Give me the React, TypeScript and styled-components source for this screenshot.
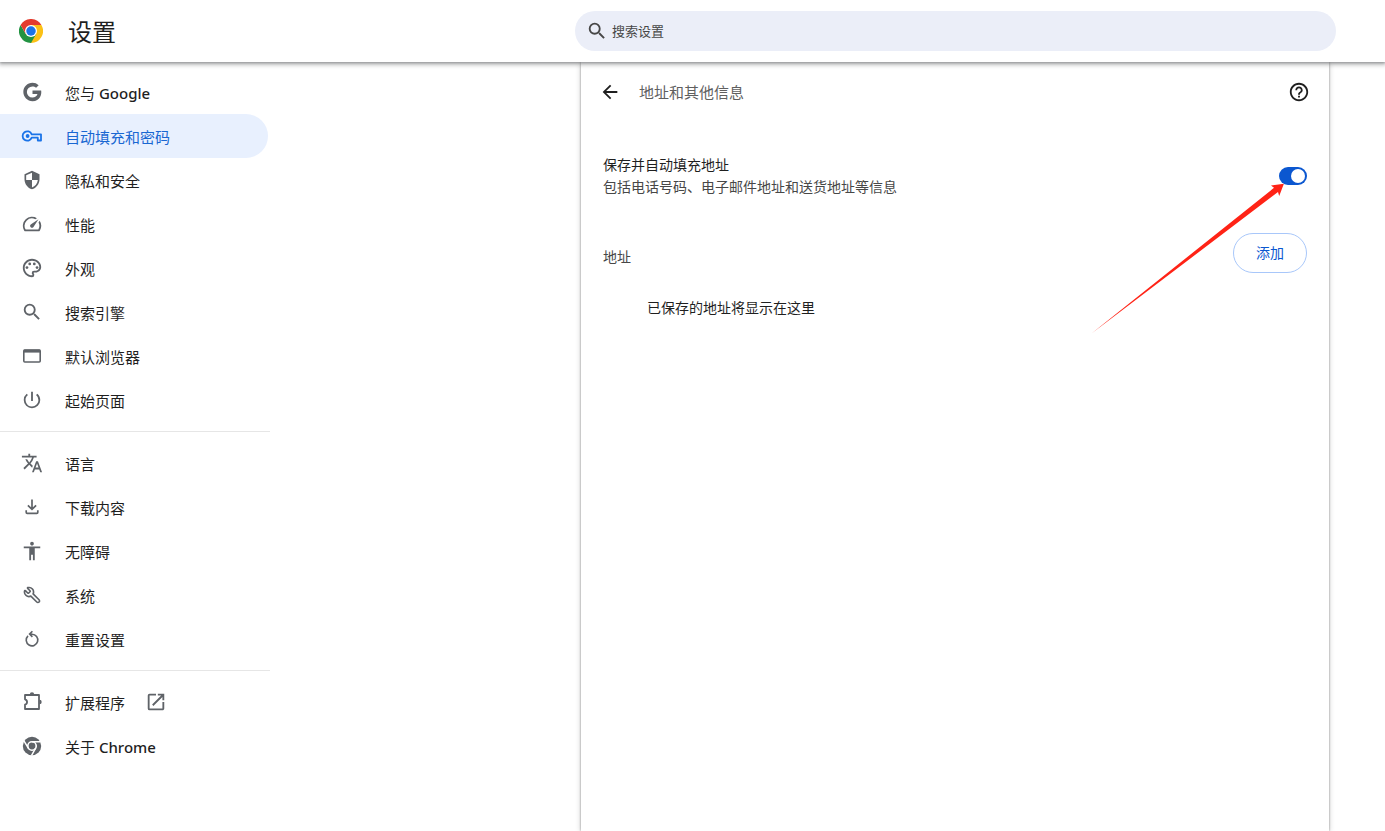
import React from "react";
import styled, { createGlobalStyle } from "styled-components";
import { Wrench } from "lucide-react";
import {
  MdSecurity, MdSpeed, MdOutlinePalette, MdSearch, MdPowerSettingsNew,
  MdTranslate, MdAccessibility, MdOpenInNew, MdArrowBack, MdHelpOutline,
} from "react-icons/md";

const GlobalStyle = createGlobalStyle`
  * { box-sizing: border-box; }
  body {
    margin: 0;
    background: #fff;
    color: #1f1f1f;
    font-family: "Noto Sans", "Noto Sans CJK SC", sans-serif;
    font-size: 14px;
    line-height: 22px;
  }
`;

const Page = styled.div`
  min-height: 100vh;
  display: flex;
  flex-direction: column;
`;

const Header = styled.header`
  position: relative;
  z-index: 1;
  height: 62px;
  flex: none;
  display: flex;
  align-items: center;
  justify-content: space-between;
  padding: 0 49px 0 19px;
  background: #fff;
  box-shadow: 0 1px 2px rgba(60, 64, 67, 0.3), 0 2px 4px 1px rgba(60, 64, 67, 0.35);
`;

const Brand = styled.div`
  display: flex;
  align-items: center;
  gap: 25px;
`;

const Heading = styled.h1`
  margin: 0;
  padding-top: 2px;
  font-size: 24px;
  line-height: 32px;
  font-weight: 400;
`;

const SearchBox = styled.label`
  flex: 0 1 761px;
  height: 40px;
  display: flex;
  align-items: center;
  gap: 4px;
  padding: 0 11px;
  border-radius: 20px;
  background: #ebeef8;
  color: #474747;
`;

const SearchInput = styled.input`
  flex: 1;
  min-width: 0;
  padding: 0;
  border: 0;
  outline: 0;
  background: transparent;
  font: inherit;
  font-size: 13px;
  color: inherit;
  &::placeholder { color: #474747; opacity: 1; }
`;

const Body = styled.div`
  flex: 1;
  display: flex;
  justify-content: space-between;
`;

const Sidebar = styled.nav`
  flex: none;
  width: 270px;
  padding-top: 8px;
`;

const NavList = styled.ul`
  margin: 0;
  padding: 0;
  list-style: none;
  & + & {
    margin-top: 9px;
    padding-top: 9px;
    border-top: 1px solid #e6e6e6;
  }
`;

const NavLink = styled.a<{ $active?: boolean }>`
  height: 44px;
  margin-right: 2px;
  padding-left: 21px;
  display: flex;
  align-items: center;
  border-radius: 0 22px 22px 0;
  background: ${(p) => (p.$active ? "#e8f0fe" : "transparent")};
  color: ${(p) => (p.$active ? "#1967d2" : "#1f1f1f")};
  font-size: 15px;
  text-decoration: none;
  svg {
    flex: none;
    color: ${(p) => (p.$active ? "#1a73e8" : "#5f6368")};
  }
`;

const NavIcon = styled.span`
  flex: none;
  width: 22px;
  display: flex;
  justify-content: center;
`;

const NavText = styled.span`
  padding: 2px 20px 0 22px;
`;

const Latin = styled.span`
  font-weight: 500;
`;

const Card = styled.main`
  flex: 0 1 748px;
  margin-right: 56px;
  padding: 8px 22px 22px;
  background: #fff;
  box-shadow: 0 0 2px rgba(0, 0, 0, 0.4), 0 1px 6px rgba(0, 0, 0, 0.2);
`;

const TitleRow = styled.div`
  height: 44px;
  margin: 0 -3px 0 -4px;
  display: flex;
  align-items: center;
  gap: 18px;
`;

const IconButton = styled.button`
  display: flex;
  padding: 0;
  border: 0;
  background: none;
  color: #1f1f1f;
`;

const Title = styled.h2`
  flex: 1;
  margin: 0;
  font-size: 15px;
  font-weight: 400;
  color: #5f5f5f;
`;

const ToggleRow = styled.label`
  margin-top: 40px;
  display: flex;
  align-items: center;
  justify-content: space-between;
`;

const Secondary = styled.div`
  color: #474747;
`;

const Switch = styled.input`
  appearance: none;
  width: 28px;
  height: 18px;
  margin: 0;
  padding: 2px;
  border-radius: 9px;
  background: #aaa;
  display: flex;
  &::before {
    content: "";
    width: 14px;
    height: 14px;
    border-radius: 50%;
    background: #fff;
  }
  &:checked {
    background: #0b57d0;
    justify-content: flex-end;
  }
`;

const SectionRow = styled.div`
  margin-top: 35px;
  display: flex;
  align-items: center;
  justify-content: space-between;
`;

const SectionTitle = styled.h3`
  margin: 0;
  padding-top: 8px;
  font-size: 14px;
  font-weight: 400;
  color: #474747;
`;

const AddButton = styled.button`
  height: 40px;
  padding: 0 22px;
  border: 1px solid #a8c7fa;
  border-radius: 20px;
  background: #fff;
  color: #0b57d0;
  font: inherit;
`;

const Empty = styled.p`
  margin: 24px 0 0 44px;
`;

const Pointer = styled.svg`
  position: absolute;
  top: 183px;
  right: 100px;
  z-index: 2;
  pointer-events: none;
`;

const GoogleIcon = () => (
  <svg width="22" height="22" viewBox="0 0 24 24" fill="currentColor" aria-hidden="true">
    <path d="M12.545 10.239v3.821h5.445c-.712 2.315-2.647 3.972-5.445 3.972a6.033 6.033 0 1 1 0-12.064c1.498 0 2.866.549 3.921 1.453l2.814-2.814A9.969 9.969 0 0 0 12.545 2C7.021 2 2.543 6.477 2.543 12s4.478 10 10.002 10c8.396 0 10.249-7.85 9.426-11.748z" />
  </svg>
);

const KeyIcon = () => (
  <svg width="22" height="22" viewBox="0 0 22 22" fill="none" stroke="currentColor" strokeWidth="1.8" aria-hidden="true">
    <path d="M10.7 9.3H20v6.2h-3.2v-2.8h-6.1A4.7 4.7 0 1 1 10.7 9.3z" strokeLinejoin="round" />
    <circle cx="6.6" cy="11" r="1.9" fill="currentColor" stroke="none" />
  </svg>
);

const WindowIcon = () => (
  <svg width="22" height="22" viewBox="0 0 22 22" aria-hidden="true">
    <rect x="2.8" y="5" width="16.4" height="12" rx="1" fill="none" stroke="currentColor" strokeWidth="1.6" />
    <path d="M2.8 4.6h16.4v3H2.8z" fill="currentColor" />
  </svg>
);

const DownloadIcon = () => (
  <svg width="22" height="22" viewBox="0 0 22 22" fill="none" stroke="currentColor" strokeWidth="1.7" aria-hidden="true">
    <path d="M11 3.5v9.6M6.9 9.3l4.1 4.1 4.1-4.1M5.2 14.2v2.1q0 1 1 1h9.6q1 0 1-1v-2.1" />
  </svg>
);

const ResetIcon = () => (
  <svg width="22" height="22" viewBox="0 0 22 22" fill="none" stroke="currentColor" strokeWidth="1.6" aria-hidden="true">
    <path d="M7 7.8A5.8 5.8 0 1 0 11 6.2H9M11.4 3.3L8.6 6.1l2.8 2.8" />
  </svg>
);

const ExtensionIcon = () => (
  <svg width="22" height="22" viewBox="0 0 22 22" aria-hidden="true">
    <path d="M4 4h14v14H4v-4.3a2.8 2.8 0 0 0 0-5.4z" fill="none" stroke="currentColor" strokeWidth="1.8" strokeLinejoin="round" />
    <path d="M8.8 3.5a2.2 2.2 0 0 1 4.4 0zM18.5 8.8a2.2 2.2 0 0 1 0 4.4z" fill="currentColor" />
  </svg>
);

const ChromeMonoIcon = () => (
  <svg width="22" height="22" viewBox="0 0 24 24" aria-hidden="true">
    <circle cx="12" cy="12" r="10" fill="currentColor" />
    <circle cx="12" cy="12" r="4.6" fill="currentColor" stroke="#fff" strokeWidth="1.8" />
    <path d="M12 7.4h9.4M8 14.3L3.2 6.3M16 14.3L11.4 22.5" stroke="#fff" strokeWidth="1.6" />
  </svg>
);

const ShieldIcon = () => <MdSecurity size={20} />;
const WrenchIcon = () => <Wrench size={18} strokeWidth={2.2} transform="scale(-1 1)" />;

const ChromeLogo = () => (
  <svg width="24" height="24" viewBox="0 0 48 48" aria-hidden="true">
    <path d="M24 24V12h20.8A24 24 0 0 1 24 48z" fill="#fbc116" />
    <path d="M3.2 12A24 24 0 0 0 24 48l10.4-18L24 24l-10.4 6z" fill="#229342" />
    <path d="M3.2 12l10.4 18L24 24V12h20.8A24 24 0 0 0 3.2 12z" fill="#e33b2e" />
    <circle cx="24" cy="24" r="12" fill="#fff" />
    <circle cx="24" cy="24" r="9.5" fill="#1a73e8" />
  </svg>
);

type IconProps = { size?: number };
type Item = {
  label: React.ReactNode;
  icon: (props: IconProps) => React.ReactNode;
  active?: boolean;
  external?: boolean;
};

const groups: Item[][] = [
  [
    { label: <>您与 <Latin>Google</Latin></>, icon: GoogleIcon },
    { label: "自动填充和密码", icon: KeyIcon, active: true },
    { label: "隐私和安全", icon: ShieldIcon },
    { label: "性能", icon: MdSpeed },
    { label: "外观", icon: MdOutlinePalette },
    { label: "搜索引擎", icon: MdSearch },
    { label: "默认浏览器", icon: WindowIcon },
    { label: "起始页面", icon: MdPowerSettingsNew },
  ],
  [
    { label: "语言", icon: MdTranslate },
    { label: "下载内容", icon: DownloadIcon },
    { label: "无障碍", icon: MdAccessibility },
    { label: "系统", icon: WrenchIcon },
    { label: "重置设置", icon: ResetIcon },
  ],
  [
    { label: "扩展程序", icon: ExtensionIcon, external: true },
    { label: <>关于 <Latin>Chrome</Latin></>, icon: ChromeMonoIcon },
  ],
];

export default function App() {
  return (
    <Page>
      <GlobalStyle />
      <Header>
        <Brand>
          <ChromeLogo />
          <Heading>设置</Heading>
        </Brand>
        <SearchBox>
          <MdSearch size={22} aria-hidden="true" />
          <SearchInput type="text" placeholder="搜索设置" aria-label="搜索设置" />
        </SearchBox>
      </Header>
      <Body>
        <Sidebar>
          {groups.map((items, g) => (
            <NavList key={g}>
              {items.map(({ label, icon: Icon, active, external }, i) => (
                <li key={i}>
                  <NavLink href="#" $active={active} aria-current={active ? "page" : undefined}>
                    <NavIcon><Icon size={22} /></NavIcon>
                    <NavText>{label}</NavText>
                    {external && <MdOpenInNew size={22} />}
                  </NavLink>
                </li>
              ))}
            </NavList>
          ))}
        </Sidebar>
        <Card>
          <TitleRow>
            <IconButton type="button" aria-label="返回"><MdArrowBack size={22} /></IconButton>
            <Title>地址和其他信息</Title>
            <IconButton type="button" aria-label="帮助"><MdHelpOutline size={22} /></IconButton>
          </TitleRow>
          <ToggleRow>
            <div>
              <div>保存并自动填充地址</div>
              <Secondary>包括电话号码、电子邮件地址和送货地址等信息</Secondary>
            </div>
            <Switch type="checkbox" role="switch" defaultChecked />
          </ToggleRow>
          <SectionRow>
            <SectionTitle>地址</SectionTitle>
            <AddButton type="button">添加</AddButton>
          </SectionRow>
          <Empty>已保存的地址将显示在这里</Empty>
        </Card>
      </Body>
      <Pointer width="194" height="151" viewBox="0 0 194 151" aria-hidden="true">
        <path d="M0.5 150.5L183 4.8L180 2.5L192.9 0.7L188.2 13L187 9z" fill="#ff2316" />
      </Pointer>
    </Page>
  );
}
